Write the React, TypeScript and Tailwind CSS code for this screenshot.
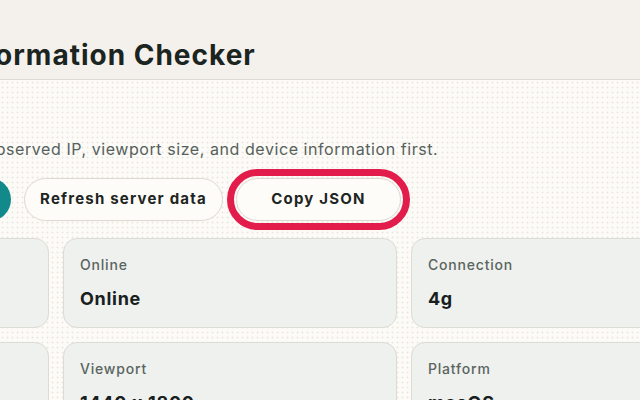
import * as React from "react";

const cards = [
  { label: "Server IP", value: "203.0.113.24" },
  { label: "Online", value: "Online" },
  { label: "Connection", value: "4g" },
  { label: "Browser", value: "Chrome 126" },
  { label: "Viewport", value: "1440 x 1800" },
  { label: "Platform", value: "macOS" },
];

const InfoCard = ({ label, value }: { label: string; value: string }) => (
  <div className="flex h-[90px] flex-col gap-[10px] rounded-[14px] border border-[#dcdcd5] bg-[#eef1ee] px-4 pt-4">
    <span className="text-[14px] leading-5 font-medium tracking-[0.8px] text-[#5a6460]">
      {label}
    </span>
    <span className="text-[18px] leading-7 font-bold tracking-[0.7px] text-[#18201d]">
      {value}
    </span>
  </div>
);

export default function App() {
  return (
    <div className="min-h-[400px] w-full overflow-hidden bg-[#fcfbf7] font-['Inter',sans-serif]">
      <header className="h-[80px] border-b border-[#dedbd4] bg-[#f4f1ec] pt-[37px]">
        <div className="ml-[-285px] w-[1200px]">
          <h1 className="ml-[-22px] text-[28px] leading-9 font-bold tracking-[1px] whitespace-nowrap text-[#1b2420]">
            Browser &amp; Device Information Checker
          </h1>
        </div>
      </header>

      <main className="h-[320px] bg-[radial-gradient(circle,#ece8df_0.8px,transparent_1.2px)] bg-[length:5px_5px] pt-[57px]">
        <div className="ml-[-285px] flex w-[1200px] flex-col">
          <p className="ml-[-10px] text-[16px] leading-6 tracking-[0.57px] whitespace-nowrap text-[#56615c]">
            Use this page to check the server-observed IP, viewport size, and
            device information first.
          </p>

          <div className="mt-[17px] flex items-center gap-[13px]">
            <button className="h-[43px] w-[296px] rounded-full bg-[#12898a] text-[15px] font-bold tracking-[1.2px] text-white">
              Refresh browser data
            </button>
            <button className="h-[43px] w-[199px] rounded-full border border-[#dcd9d1] bg-[#fdfcf9] text-[15px] font-bold tracking-[1.2px] text-[#1e2522]">
              Refresh server data
            </button>
            <button className="h-[43px] w-[165px] rounded-full border border-[#dcd9d1] bg-[#fdfcf9] text-[15px] font-bold tracking-[1.2px] text-[#1e2522] outline-[7px] outline-offset-2 outline-[#e21c4b] outline-solid">
              Copy JSON
            </button>
          </div>

          <div className="mt-[17px] grid grid-cols-[334px_334px_334px] gap-[14px]">
            {cards.map((c) => (
              <InfoCard key={c.label} label={c.label} value={c.value} />
            ))}
          </div>
        </div>
      </main>
    </div>
  );
}
